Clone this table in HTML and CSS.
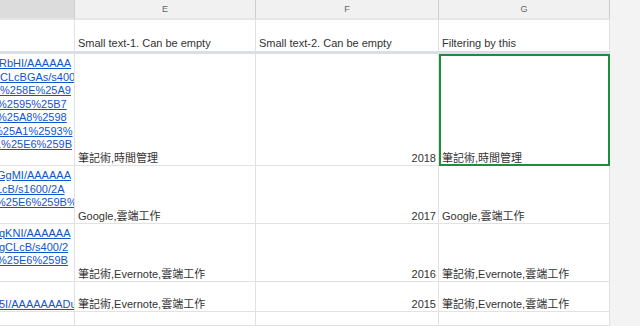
FILE: index.html
```html
<!DOCTYPE html>
<html lang="zh-Hant">
<head>
<meta charset="utf-8">
<title>Sheet</title>
<link rel="stylesheet" href="styles.css">
</head>
<body>
<div class="sheet">
  <div class="hdr hdr-sel"></div>
  <div class="hdr">E</div>
  <div class="hdr">F</div>
  <div class="hdr">G</div>
  <div class="gutter"></div>

  <div class="c top"></div>
  <div class="c top">Small text-1. Can be empty</div>
  <div class="c top">Small text-2. Can be empty</div>
  <div class="c top">Filtering by this</div>

  <div class="freeze"></div>

  <div class="c link">
    <a class="ln s1">RbHI/AAAAAA</a>
    <a class="ln">CLcBGAs/s400</a>
    <a class="ln">%258E%25A9</a>
    <a class="ln s3">%2595%25B7</a>
    <a class="ln s3">%25A8%2598</a>
    <a class="ln s6">%25A1%2593%</a>
    <a class="ln s5">1%25E6%259B</a>
  </div>
  <div class="c">筆記術,時間管理</div>
  <div class="c num">2018</div>
  <div class="c sel">筆記術,時間管理</div>

  <div class="c link">
    <a class="ln s3">GgMI/AAAAAA</a>
    <a class="ln s4">LcB/s1600/2A</a>
    <a class="ln s4">%25E6%259B%</a>
  </div>
  <div class="c">Google,雲端工作</div>
  <div class="c num">2017</div>
  <div class="c">Google,雲端工作</div>

  <div class="c link">
    <a class="ln s1">qKNI/AAAAAA</a>
    <a class="ln s1">gCLcB/s400/2</a>
    <a class="ln s3">%25E6%259B</a>
  </div>
  <div class="c">筆記術,Evernote,雲端工作</div>
  <div class="c num">2016</div>
  <div class="c">筆記術,Evernote,雲端工作</div>

  <div class="c link bottom">
    <a class="ln s1">5I/AAAAAAADu</a>
  </div>
  <div class="c">筆記術,Evernote,雲端工作</div>
  <div class="c num">2015</div>
  <div class="c">筆記術,Evernote,雲端工作</div>

  <div class="c"></div>
  <div class="c"></div>
  <div class="c"></div>
  <div class="c"></div>
</div>
</body>
</html>
```
FILE: styles.css
```css
html, body {
  margin: 0;
  padding: 0;
  background: #ffffff;
}

body {
  width: 640px;
  height: 326px;
  overflow: hidden;
  font-family: "Liberation Sans", Arial, "Noto Sans CJK TC", sans-serif;
  font-size: 11px;
  color: #333333;
}

.sheet {
  display: grid;
  grid-template-columns: 75px 181px 183px 171px 1fr;
  grid-template-rows: 20px 31px 3px 112px 58px 58px 30px 14px;
  width: 640px;
  height: 326px;
}

.hdr {
  box-sizing: border-box;
  background: #f1f1f1;
  border-right: 1px solid #cdcdcd;
  border-bottom: 2px solid #e6e6e6;
  font-size: 9px;
  color: #666666;
  display: flex;
  align-items: center;
  justify-content: center;
  padding-bottom: 1px;
}

.hdr-sel {
  background: #dcdcdc;
}

.gutter {
  grid-column: 5;
  grid-row: 1 / -1;
  background: #f3f3f3;
}

.freeze {
  grid-column: 1 / 5;
  background: #dadee5;
}

.c {
  box-sizing: border-box;
  border-right: 1px solid #e2e2e2;
  border-bottom: 1px solid #e2e2e2;
  padding: 0 3px;
  display: flex;
  flex-direction: column;
  justify-content: flex-end;
  line-height: 14px;
  white-space: nowrap;
  overflow: hidden;
}

.c.top {
  border-bottom: none;
  padding-bottom: 1px;
}

.num {
  align-items: flex-end;
  padding-right: 2px;
}

.link {
  justify-content: flex-start;
  padding: 3px 0 0 0;
  line-height: 13.5px;
}

.link.bottom {
  justify-content: flex-end;
  padding: 0;
  line-height: 14px;
}

.ln {
  display: block;
  color: #1155cc;
  text-decoration: underline;
}

.s1 { margin-left: -1px; }
.s3 { margin-left: -3px; }
.s4 { margin-left: -4px; }
.s5 { margin-left: -5px; }
.s6 { margin-left: -7px; }

.sel {
  outline: 2px solid #1e8e3e;
  outline-offset: -2px;
}
```
